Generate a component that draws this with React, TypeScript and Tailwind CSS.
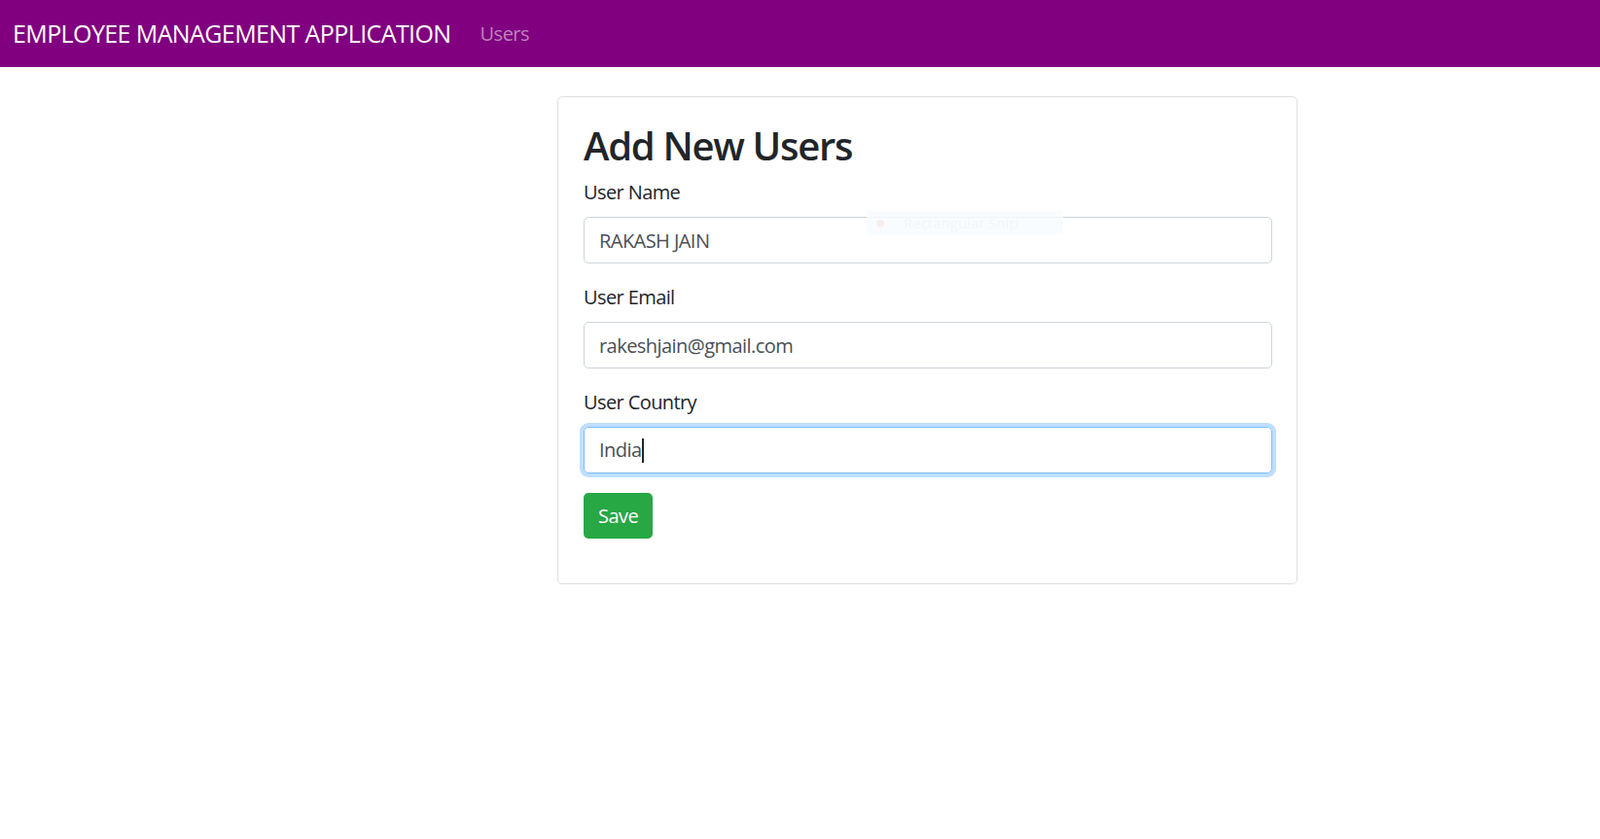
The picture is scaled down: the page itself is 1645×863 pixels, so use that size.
import { useState } from 'react';

const font = { fontFamily: '"Open Sans", "Noto Sans", Arial, sans-serif' };

function Field({ label, value, onChange }: { label: string; value: string; onChange: (v: string) => void }) {
  return (
    <div className="mb-5">
      <label className="block mb-[10px] text-[20px] leading-[30px] text-[#212529] tracking-[-0.6px]">{label}</label>
      <input
        value={value}
        onChange={e => onChange(e.target.value)}
        className="block w-full h-[48px] px-[15px] border border-[#ced4da] rounded-[5px] text-[20px] text-[#495057] tracking-[-0.55px] outline-none bg-white"
      />
    </div>
  );
}

export default function App() {
  const [name, setName] = useState('RAKASH JAIN');
  const [email, setEmail] = useState('rakeshjain@gmail.com');

  return (
    <div className="min-h-[863px] bg-white" style={font}>
      {/* Navbar */}
      <nav className="h-[69px] bg-[#800080] flex items-center pl-[13px]">
        <span className="text-white text-[25px] tracking-[-0.6px]">EMPLOYEE MANAGEMENT APPLICATION</span>
        <a className="ml-[30px] text-[20px] text-[#bf80bf] tracking-[-0.5px]">Users</a>
      </nav>

      {/* Card */}
      <div className="relative ml-[573px] mt-[30px] w-[761px] border border-[#dfdfdf] rounded-[5px] pl-[26px] pr-[25px] pt-[26px] pb-[46px]">
        <h2 className="text-[40px] leading-[48px] font-semibold text-[#212529] mb-[9px] tracking-[-1.3px]">Add New Users</h2>

        <Field label="User Name" value={name} onChange={setName} />
        <Field label="User Email" value={email} onChange={setEmail} />

        <div className="mb-5">
          <label className="block mb-[10px] text-[20px] leading-[30px] text-[#212529] tracking-[-0.6px]">User Country</label>
          <div className="flex items-center h-[48px] px-[15px] border border-[#80bdff] rounded-[5px] ring-4 ring-[#bfdeff] text-[20px] text-[#495057] tracking-[-0.55px]">
            <span>India</span>
            <span className="w-[2px] h-[25px] bg-[#212529]" />
          </div>
        </div>

        <button className="h-[47px] px-[15px] bg-[#28a745] text-white text-[20px] rounded-[5px] tracking-[-0.5px]">Save</button>

        {/* faint screenshot overlay */}
        <div className="absolute left-[317px] top-[117px] w-[202px] h-[25px] bg-[#f8fbff]/80 flex items-center gap-[20px] pl-[10px] text-[15px] text-[#f3f5f8]">
          <span className="w-[8px] h-[8px] rounded-full bg-[#f5eeee]" />
          <span>Rectangular Snip</span>
        </div>
      </div>
    </div>
  );
}
